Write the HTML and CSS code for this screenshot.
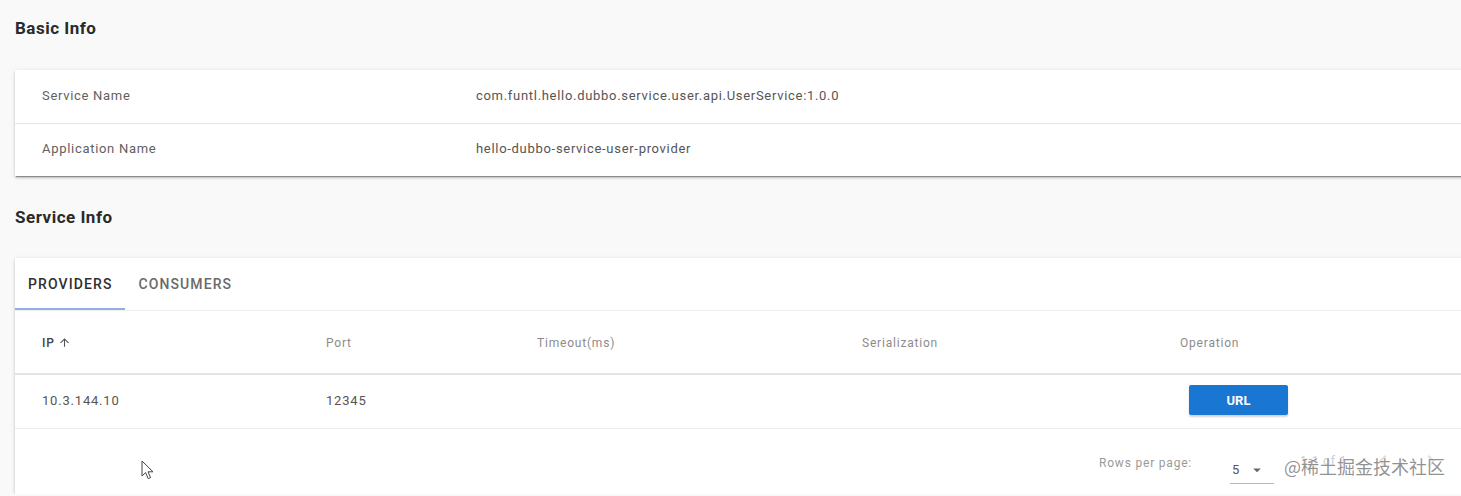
FILE: index.html
```html
<!DOCTYPE html>
<html lang="en">
<head>
    <meta charset="utf-8">
    <title>Service Detail</title>
    <link rel="stylesheet" href="styles.css">
</head>
<body>
    <main class="content">
        <h2 class="sectionTitle">Basic Info</h2>

        <section class="card infoCard">
            <div class="infoRow">
                <span class="infoLabel">Service Name</span>
                <span class="infoValue">com.funtl.hello.dubbo.service.user.api.UserService:1.0.0</span>
            </div>
            <div class="infoRow">
                <span class="infoLabel">Application Name</span>
                <span class="infoValue">hello-dubbo-service-user-provider</span>
            </div>
        </section>

        <h2 class="sectionTitle">Service Info</h2>

        <section class="card serviceCard">
            <nav class="tabs">
                <span class="tab active">Providers</span>
                <span class="tab">Consumers</span>
            </nav>

            <table class="dataTable">
                <colgroup>
                    <col class="colIp">
                    <col class="colPort">
                    <col class="colTimeout">
                    <col class="colSerial">
                    <col>
                </colgroup>
                <thead>
                    <tr>
                        <th class="sorted">IP
                            <svg class="sortIcon" viewBox="0 0 24 24"><path d="M4 12l1.41 1.41L11 7.83V20h2V7.83l5.58 5.59L20 12l-8-8-8 8z"/></svg>
                        </th>
                        <th>Port</th>
                        <th>Timeout(ms)</th>
                        <th>Serialization</th>
                        <th>Operation</th>
                    </tr>
                </thead>
                <tbody>
                    <tr>
                        <td>10.3.144.10</td>
                        <td>12345</td>
                        <td></td>
                        <td></td>
                        <td><button class="urlButton">URL</button></td>
                    </tr>
                </tbody>
            </table>

            <div class="tableFooter">
                <span class="rowsLabel">Rows per page:</span>
                <span class="rowsSelect">
                    5
                    <svg class="selectArrow" viewBox="0 0 24 24"><path d="M7 10l5 5 5-5z"/></svg>
                </span>
                <span class="pageInfo">1-1 of 1</span>
                <svg class="pageIcon" viewBox="0 0 24 24"><path d="M15.41 7.41L14 6l-6 6 6 6 1.41-1.41L10.83 12z"/></svg>
                <svg class="pageIcon" viewBox="0 0 24 24"><path d="M10 6L8.59 7.41 13.17 12l-4.58 4.59L10 18l6-6z"/></svg>
            </div>
        </section>
    </main>

    <svg class="cursor" viewBox="0 0 14 20"><path d="M1 1v15l3.6-3.4 2.6 6 2.4-1-2.6-5.8H12z"/></svg>
    <div class="watermark">@稀土掘金技术社区</div>
</body>
</html>
```

FILE: styles.css
```css
* { box-sizing: border-box }

body {
    margin: 0;
    overflow: hidden;
    background-color: #f9f9f9;
    font-family: Roboto, "Liberation Sans", Arial, sans-serif;
    color: #555;
}

.content {
    width: 1470px;
    padding-left: 15px;
}

.sectionTitle {
    margin: 0;
    font-size: 17px;
    line-height: 20px;
    font-weight: 700;
    letter-spacing: 0.5px;
    color: #2a2a2a;
}

.sectionTitle:first-child { margin-top: 18px; margin-bottom: 32px }

.infoCard + .sectionTitle { margin: 31px 0 31px }

.card {
    background-color: white;
    box-shadow: 0 2px 1px -1px rgba(0,0,0,.3), 0 2px 2px 0 rgba(0,0,0,.14), 0 1px 5px 0 rgba(0,0,0,.12);
}

/* basic info */
.infoRow {
    display: grid;
    grid-template-columns: 461px 1fr;
    align-items: center;
    height: 53px;
    padding-bottom: 3px;
    font-size: 13px;
    letter-spacing: 0.7px;
}

.infoRow + .infoRow { border-top: 1px solid #e6e6e6 }

.infoLabel { padding-left: 27px; color: #5f5f5f }

.infoValue { color: #555 }

/* tabs */
.tabs {
    display: flex;
    height: 53px;
    border-bottom: 1px solid #f0f0f0;
}

.tab {
    display: flex;
    align-items: center;
    padding: 2px 13px 0;
    font-size: 14px;
    font-weight: 500;
    letter-spacing: 1.1px;
    text-transform: uppercase;
    color: #6a6a6a;
    border-bottom: 2px solid transparent;
}

.tab.active {
    color: #2f2f2f;
    border-bottom-color: #93aee0;
}

/* table */
.dataTable {
    width: 100%;
    border-collapse: collapse;
    table-layout: fixed;
}

.colIp { width: 311px }
.colPort { width: 211px }
.colTimeout { width: 325px }
.colSerial { width: 318px }

.dataTable th, .dataTable td {
    padding: 0;
    text-align: left;
}

.dataTable th:first-child, .dataTable td:first-child { padding-left: 27px }

.dataTable th {
    height: 63px;
    padding-top: 2px;
    font-size: 12px;
    font-weight: 400;
    letter-spacing: 0.8px;
    color: #8c8c8c;
    border-bottom: 2px solid #e4e4e4;
}

.dataTable th.sorted { color: #444; font-weight: 500 }

.sortIcon {
    width: 13px;
    height: 13px;
    fill: #555;
    vertical-align: -2px;
}

.dataTable td {
    height: 54px;
    padding-bottom: 2px;
    font-size: 13px;
    letter-spacing: 0.8px;
    color: #555;
    border-bottom: 1px solid #ececec;
}

.urlButton {
    margin-left: 9px;
    width: 99px;
    height: 30px;
    border: none;
    border-radius: 2px;
    background-color: #1976d2;
    color: white;
    font-family: Roboto, "Liberation Sans", Arial, sans-serif;
    font-size: 13px;
    font-weight: 700;
    box-shadow: 0 2px 2px rgba(0,0,0,.18);
}

/* pagination */
.tableFooter {
    display: flex;
    align-items: center;
    justify-content: flex-end;
    height: 65px;
    padding-right: 27px;
    font-size: 12px;
    letter-spacing: 0.8px;
    color: #9a9a9a;
}

.rowsLabel { margin-right: 38px; margin-top: 4px }

.rowsSelect {
    display: flex;
    align-items: center;
    justify-content: space-between;
    width: 44px;
    height: 34px;
    padding: 6px 8px 0 2px;
    border-bottom: 1px solid #bbb;
    color: #555;
    font-size: 13px;
    margin-top: 12px;
}

.selectArrow { width: 18px; height: 18px; fill: #666 }

.pageInfo { margin: 0 24px 0 26px; color: #ccc }

.pageIcon {
    width: 24px;
    height: 24px;
    fill: #ddd;
}

.pageIcon + .pageIcon { margin-left: 24px }

/* overlays */
.cursor {
    position: absolute;
    left: 141px;
    top: 460px;
    width: 14px;
    height: 20px;
    fill: white;
    stroke: #444;
    stroke-width: 1;
}

.watermark {
    position: absolute;
    right: 16px;
    bottom: 17px;
    font-family: "Noto Sans CJK SC", sans-serif;
    font-size: 18px;
    color: rgba(110,110,110,.75);
    text-shadow: 0 0 2px white;
}
```
